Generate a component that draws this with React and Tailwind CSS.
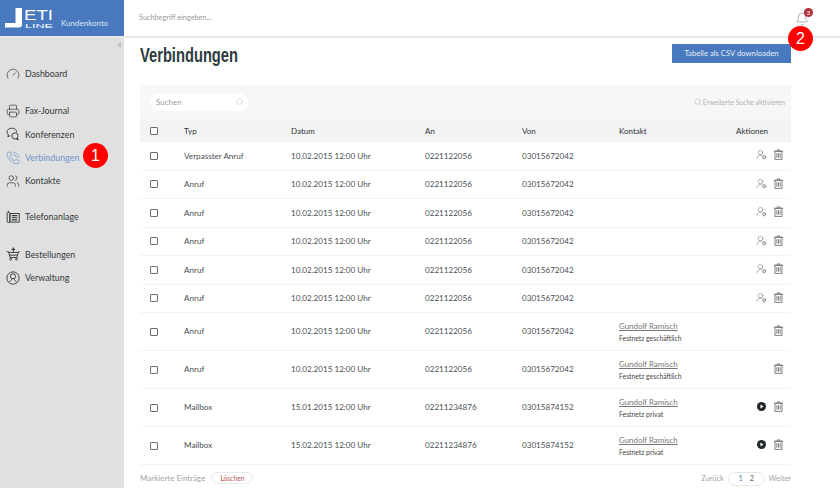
import React from "react";
import { Search, Bell, Gauge, Printer, PhoneCall, Users, UserRoundCog } from "lucide-react";

const Conf = (p) => (
  <svg viewBox="0 0 18 18" fill="none" stroke="currentColor" strokeWidth="1.2" {...p}>
    <path d="M7.5 1.500c-3.600 0-6.200 2.300-6.200 5 0 1.400.7 2.600 1.800 3.500L2.300 12.500l3-1.300" />
    <path d="M13.900 6.800C13.400 3.600 11 1.500 7.500 1.500" />
    <circle cx="11.500" cy="11.500" r="4" />
    <path d="M14.500 14.200l1.400 2.300-2.800-1" />
  </svg>
);
const Tel = (p) => (
  <svg viewBox="0 0 18 18" fill="none" stroke="currentColor" strokeWidth="1.2" {...p}>
    <rect x="1.500" y="3" width="3.500" height="13" rx="1.200" />
    <path d="M3 3V.8" />
    <rect x="5" y="4.500" width="12" height="11" />
    <path d="M7.500 7.200h7M7.500 10h7M7.500 12.800h7" strokeWidth="1.500" />
  </svg>
);
const Cart = (p) => (
  <svg viewBox="0 0 18 18" fill="none" stroke="currentColor" strokeWidth="1.300" {...p}>
    <path d="M.8 6h2.400l2 7.500h8.800L16 6h1.400" />
    <path d="M3.500 7h12M4.500 10.500h10.200" />
    <circle cx="6" cy="15.700" r="1.200" />
    <circle cx="13.500" cy="15.700" r="1.200" />
    <path d="M9.500 0.500v5.500M7.300 3h4.400" strokeWidth="1.500" />
  </svg>
);
const Admin = (p) => (
  <svg viewBox="0 0 18 18" fill="none" stroke="currentColor" strokeWidth="1.200" {...p}>
    <circle cx="9" cy="9" r="7.900" />
    <circle cx="9" cy="6.800" r="3.300" />
    <path d="M7.300 9.800c0 2-1 3-2.800 3.600M10.700 9.800c0 2 1 3 2.800 3.600" />
  </svg>
);
const TrashIcon = () => (
  <svg viewBox="0 0 12 12" fill="none" stroke="currentColor" strokeWidth="1" className="w-[11px] h-[11px] shrink-0">
    <path d="M1 2.500h10M4.500 2.500V1h3v1.500" />
    <rect x="2.200" y="2.500" width="7.600" height="8.800" />
    <path d="M4.200 4.500v5M6 4.500v5M7.800 4.500v5" />
  </svg>
);
const PlayIcon = () => (
  <svg viewBox="0 0 10 10" className="w-[9px] h-[9px] shrink-0 mx-[1px]">
    <circle cx="5" cy="5" r="5" fill="#20272b" />
    <path d="M3.800 2.800v4.400L7.300 5z" fill="#fff" />
  </svg>
);
const Logo = () => (
  <svg viewBox="0 0 49 20" className="w-[49px] h-[20px] shrink-0 overflow-visible">
    <path d="M0 19.500v-4.500h10.500V0H17v16.500c0 2-1 3-3 3z" fill="#fff" />
    <text x="19" y="12.300" fontFamily="'Liberation Sans',sans-serif" fontSize="15" fill="#fff" textLength="29" lengthAdjust="spacingAndGlyphs">ETI</text>
    <text x="20" y="20" fontFamily="'Liberation Sans',sans-serif" fontSize="5" fill="#fff" textLength="28" lengthAdjust="spacingAndGlyphs">LINE</text>
  </svg>
);

const nav = [
  { l: "Dashboard", I: Gauge, mt: "mt-[24px]" },
  { l: "Fax-Journal", I: Printer, mt: "mt-[14px]" },
  { l: "Konferenzen", I: Conf },
  { l: "Verbindungen", I: PhoneCall, a: true },
  { l: "Kontakte", I: Users },
  { l: "Telefonanlage", I: Tel, mt: "mt-[13px]" },
  { l: "Bestellungen", I: Cart, mt: "mt-[14px]" },
  { l: "Verwaltung", I: Admin },
];

const base = { d: "10.02.2015", a: "0221122056", v: "03015672042" };
const rows = [
  { t: "Verpasster Anruf", ...base },
  { t: "Anruf", ...base },
  { t: "Anruf", ...base },
  { t: "Anruf", ...base },
  { t: "Anruf", ...base },
  { t: "Anruf", ...base },
  { t: "Anruf", ...base, k: "Festnetz geschäftlich" },
  { t: "Anruf", ...base, k: "Festnetz geschäftlich" },
  { t: "Mailbox", d: "15.01.2015", a: "02211234876", v: "03015874152", k: "Festnetz privat", p: true },
  { t: "Mailbox", d: "15.02.2015", a: "02211234876", v: "03015874152", k: "Festnetz privat", p: true },
];

const cols = "grid grid-cols-[34px_107px_134px_97px_97px_117px_55px] items-center pl-[10px]";
const Box = () => <span className="block w-[8px] h-[8px] border border-[#6e6e6e] bg-white rounded-[1px]" />;
const Num = ({ n, cls }) => (
  <div className={`absolute w-[25px] h-[25px] rounded-full bg-[#f00] text-white flex items-center justify-center text-[16px] font-['Liberation_Sans',sans-serif] ${cls}`}>{n}</div>
);

export default function App() {
  return (
    <div className="relative w-[840px] h-[488px] overflow-hidden bg-white font-['Lato',sans-serif] text-[#3a3f42]">
      <header className="flex h-[38px] border-b-2 border-[#e9e9e9]">
        <div className="w-[124px] h-[36px] bg-[#4878bd] flex items-end pl-[5px] pb-[8px] gap-[7px] shrink-0">
          <Logo />
          <span className="text-[8px] leading-none text-[#dbe6f5] mb-[1px]">Kundenkonto</span>
        </div>
        <div className="flex-1 flex items-center justify-between pl-[15px] pr-[31px]">
          <span className="text-[7.300px] text-[#9a9a9a]">Suchbegriff eingeben...</span>
          <div className="relative mt-[1px]">
            <Bell size={14} strokeWidth={1} className="text-[#777]" />
            <span className="absolute -top-[4px] -right-[4px] w-[9px] h-[9px] rounded-full bg-[#b3303a] text-white text-[6px] leading-[9px] text-center">3</span>
          </div>
        </div>
      </header>
      <div className="flex h-[450px]">
        <aside className="relative w-[124px] shrink-0 bg-[#e0e0e0] flex flex-col">
          <span className="absolute right-[3px] top-[4px] w-0 h-0 border-y-[3px] border-y-transparent border-r-[4px] border-r-[#c2c2c2]" />
          {nav.map(({ l, I, a, mt }) => (
            <div key={l} className={`flex items-center h-[23.300px] pl-[6px] gap-[5px] ${mt || ""} ${a ? "text-[#6f95cf]" : "text-[#33383a]"}`}>
              <I width={14} height={14} strokeWidth={1.200} className="shrink-0" />
              <span className="text-[8.900px]">{l}</span>
            </div>
          ))}
        </aside>
        <main className="w-[651px] ml-[16px]">
          <div className="flex justify-between items-start h-[47px] pt-[5px]">
            <h1 className="text-[21px] leading-[24px] font-bold text-[#2d3a40] font-['Liberation_Sans',sans-serif] origin-left scale-x-[0.7] whitespace-nowrap">Verbindungen</h1>
            <button className="w-[119px] h-[19px] mt-[1px] bg-[#4878bd] text-[#e6edf7] text-[7.700px]">Tabelle als CSV downloaden</button>
          </div>
          <div className="flex items-center justify-between h-[34px] bg-[#f7f7f7] pl-[10px] pr-[6px] rounded-t-[2px]">
            <div className="w-[98px] h-[17px] bg-white rounded-full flex items-center justify-between pl-[6px] pr-[4px]">
              <span className="text-[8px] text-[#9a9a9a]">Suchen</span>
              <Search size={8} strokeWidth={1.200} className="text-[#b5b5b5]" />
            </div>
            <div className="flex items-center gap-[1px] text-[6.800px] text-[#b0b0b0]">
              <Search size={8} strokeWidth={1.200} className="text-[#999]" />
              Erweiterte Suche aktivieren
            </div>
          </div>
          <div className={`${cols} h-[23px] bg-[#f1f3f5] text-[8px] text-[#333]`}>
            <Box />
            <span className="mt-[1px]">Typ</span>
            <span className="mt-[1px]">Datum</span>
            <span className="mt-[1px]">An</span>
            <span className="mt-[1px]">Von</span>
            <span className="mt-[1px]">Kontakt</span>
            <span className="mt-[1px]">Aktionen</span>
          </div>
          {rows.map((r, i) => (
            <div key={i} className={`${cols} ${r.k ? "h-[38px]" : "h-[28.500px]"} border-b border-[#f4f4f4] text-[8.100px] text-[#4a4f52]`}>
              <Box />
              <span>{r.t}</span>
              <span>{r.d} 12:00 Uhr</span>
              <span>{r.a}</span>
              <span>{r.v}</span>
              <div className="flex flex-col gap-[3px]">
                {r.k && <span className="underline text-[7.900px] leading-[10px] text-[#777]">Gundolf Ramisch</span>}
                {r.k && <span className="text-[6.800px] leading-[8px] text-[#444]">{r.k}</span>}
              </div>
              <div className="flex items-center justify-end gap-[6px] pr-[7px] text-[#777] -mt-[2px]">
                {r.p && <PlayIcon />}
                {!r.k && <UserRoundCog width={11} height={11} strokeWidth={1.200} />}
                <TrashIcon />
              </div>
            </div>
          ))}
          <div className="flex items-center justify-between h-[26px] text-[8px] text-[#a3a3a3]">
            <div className="flex items-center gap-[6px]">
              <span>Markierte Einträge</span>
              <span className="h-[12px] px-[8px] rounded-full border border-[#eaeaea] text-[6.700px] leading-[10px] text-[#c0504d]">Löschen</span>
            </div>
            <div className="flex items-center gap-[4px] text-[7.400px] mt-[1px]">
              <span>Zurück</span>
              <span className="w-[37px] h-[14px] rounded-full border border-[#e6e6e6] flex items-center justify-center gap-[7px] text-[#5b7fb5]"><span>1</span><span className="text-[#666]">2</span></span>
              <span>Weiter</span>
            </div>
          </div>
        </main>
      </div>
      <Num n="1" cls="left-[83px] top-[143px]" />
      <Num n="2" cls="left-[788px] top-[26px]" />
    </div>
  );
}
